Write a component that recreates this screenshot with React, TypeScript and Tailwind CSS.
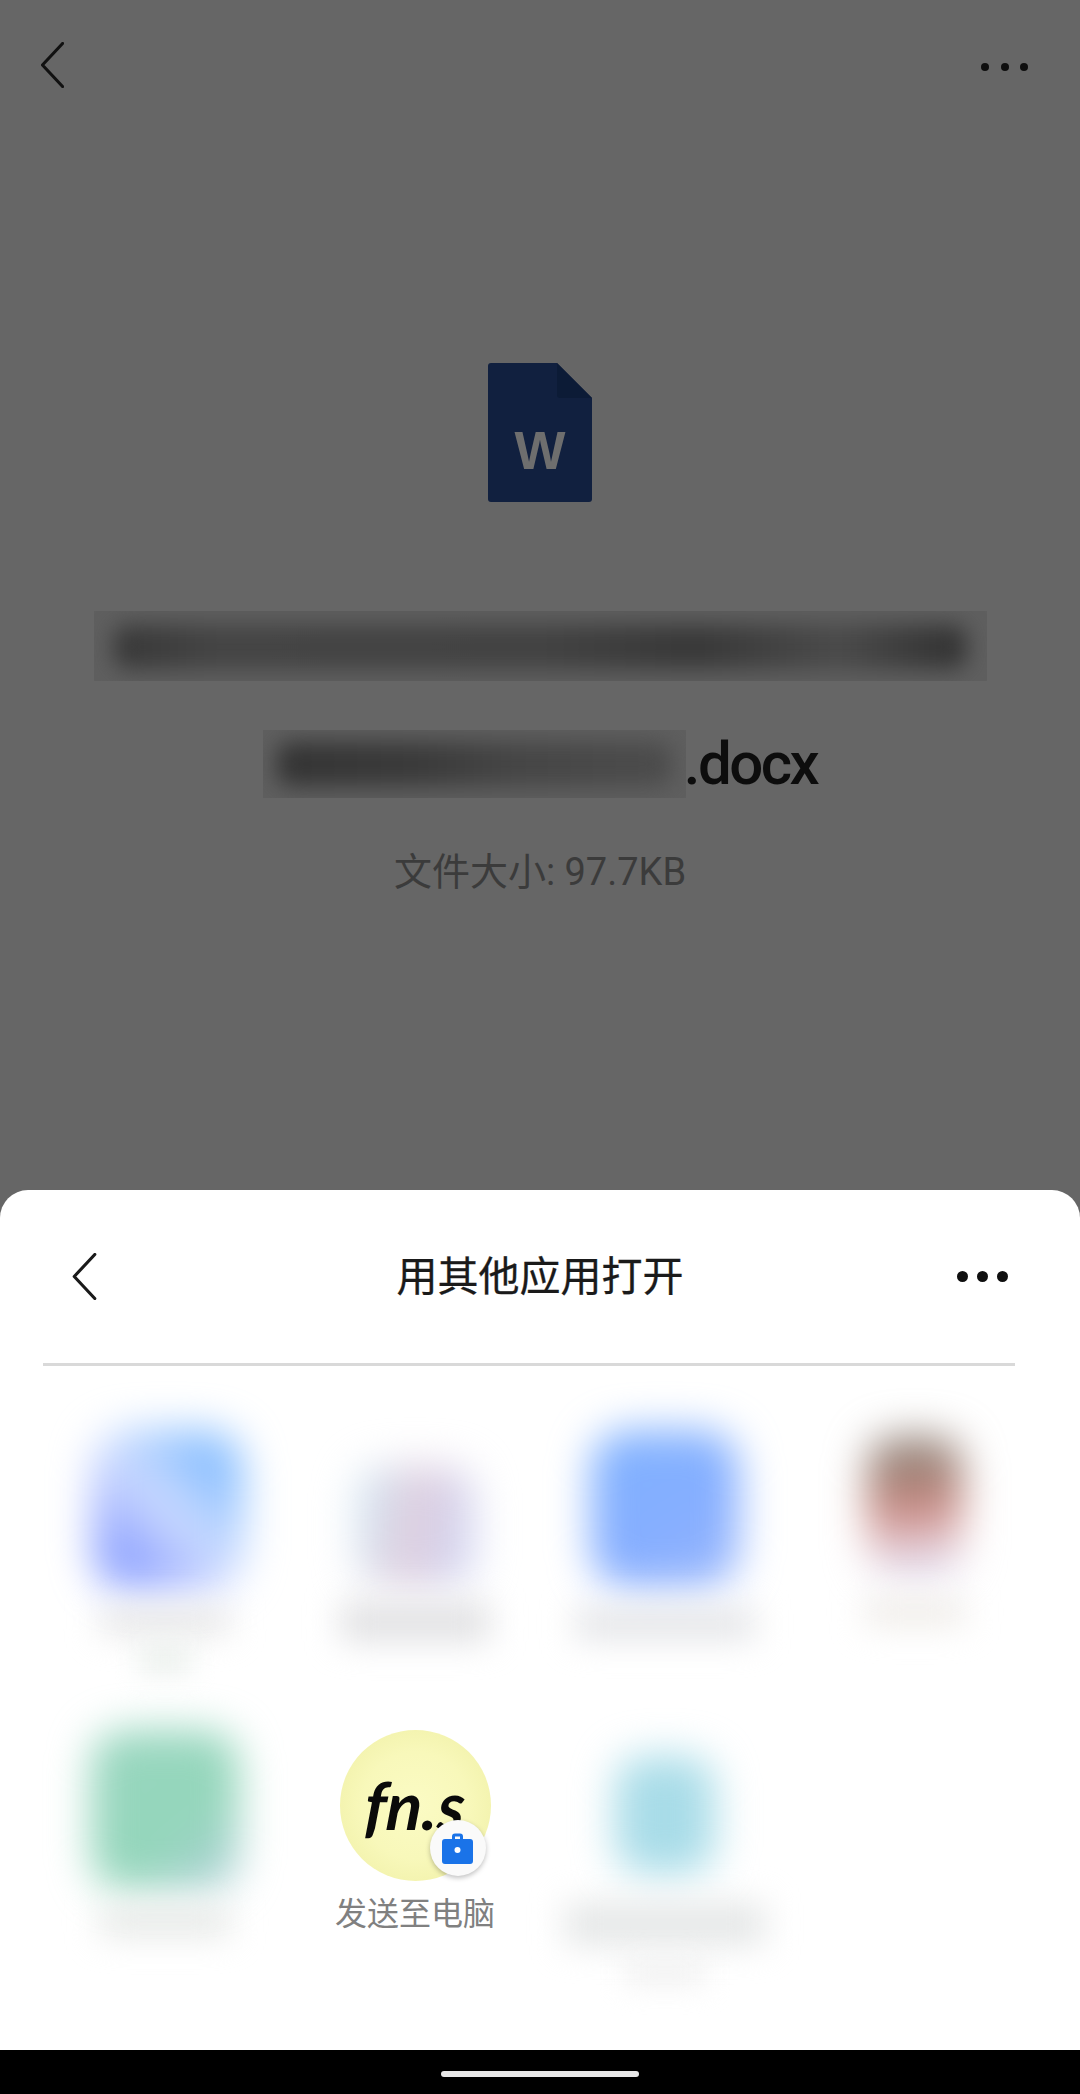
import React from "react";

const cjk = "font-['Roboto','Noto_Sans_CJK_SC',sans-serif]";

const BackIcon: React.FC<{ className?: string; color: string }> = ({ className, color }) => (
  <svg viewBox="0 0 24 48" className={className} fill="none">
    <path d="M22.5 1.5 1.5 24l21 22.500" stroke={color} strokeWidth="3.200" strokeLinecap="round" strokeLinejoin="round" />
  </svg>
);

const Dots: React.FC<{ size: string; gap: string }> = ({ size, gap }) => (
  <div className={`flex ${gap}`}>
    <span className={`${size} rounded-full bg-[#0f0f0f]`} />
    <span className={`${size} rounded-full bg-[#0f0f0f]`} />
    <span className={`${size} rounded-full bg-[#0f0f0f]`} />
  </div>
);

const FileIcon: React.FC = () => (
  <svg width="104" height="139" viewBox="0 0 104 139" className="block">
    <path d="M3 0h66l35 35v101a3 3 0 0 1-3 3H3a3 3 0 0 1-3-3V3a3 3 0 0 1 3-3z" fill="#11203f" />
    <path d="M69 0l35 35H72a3 3 0 0 1-3-3z" fill="#0c1b36" />
    <text x="52" y="106" textAnchor="middle" fontSize="54" fontWeight="700" fontFamily="Liberation Sans" fill="#6e6e6e">
      W
    </text>
  </svg>
);

const BlurBar: React.FC<{ box: string; bar: string }> = ({ box, bar }) => (
  <div className={`${box} overflow-hidden bg-[#5f5f5f]`}>
    <div className={`${bar} blur-[11px]`} />
  </div>
);

const BlurApp: React.FC<{ icon: string; label: string; extra?: string }> = ({ icon, label, extra }) => (
  <div className="flex h-[300px] flex-col items-center">
    <div className={`${icon} blur-[20px]`} />
    <div className={`${label} blur-[16px]`} />
    {extra && <div className={`${extra} blur-[14px]`} />}
  </div>
);

const App: React.FC = () => {
  return (
    <div className={`flex h-[2094px] w-[1080px] flex-col overflow-hidden bg-[#666666] ${cjk}`}>
      <div className="flex h-[1190px] flex-col items-center">
        <div className="mt-[42px] flex h-[46px] w-full items-center justify-between pl-[41px] pr-[52px]">
          <BackIcon className="h-[46px] w-[23px]" color="#111111" />
          <div className="mt-1">
            <Dots size="h-[8px] w-[8px]" gap="gap-[11.500px]" />
          </div>
        </div>
        <div className="mt-[275px]">
          <FileIcon />
        </div>
        <BlurBar
          box="mt-[109px] h-[70px] w-[893px] p-[14px_20px]"
          bar="h-[44px] w-full rounded-[14px] bg-[linear-gradient(90deg,#383838_0%,#444444_12%,#424242_50%,#383838_68%,#4a4a4a_85%,#363636_97%)]"
        />
        <div className="mt-[49px] flex h-[68px] items-center">
          <BlurBar
            box="h-[68px] w-[423px] p-[12px_14px]"
            bar="h-[44px] w-full rounded-[14px] bg-[linear-gradient(90deg,#343434_0%,#3a3a3a_35%,#454545_60%,#4c4c4c_100%)]"
          />
          <span className="ml-[-2px] text-[60px] leading-[68px] font-medium tracking-[-2.500px] text-[#0d0d0d]">.docx</span>
        </div>
        <p className="mt-[52px] text-[38px] leading-[44px] text-[#3b3b3b]">文件大小: 97.7KB</p>
      </div>

      <div className="flex flex-1 flex-col rounded-t-[28px] bg-white">
        <div className="grid h-[173px] grid-cols-[1fr_auto_1fr] items-center pl-[72px] pr-[72px]">
          <BackIcon className="h-[47px] w-[25px]" color="#1a1a1a" />
          <h1 className="text-[41px] leading-[48px] text-[#1a1a1a] [-webkit-text-stroke:0.3px_#1a1a1a]">用其他应用打开</h1>
          <div className="justify-self-end">
            <Dots size="h-[11px] w-[11px]" gap="gap-[9px]" />
          </div>
        </div>
        <div className="ml-[43px] mr-[65px] h-[3px] bg-[#d9d9d9]" />
        <div className="grid grid-cols-4 px-10 pt-[64px]">
          <BlurApp
            icon="ml-[6px] h-[160px] w-[150px] rounded-[38px] bg-[linear-gradient(225deg,#7cb8ff_0%,#8cc0ff_22%,#cddcff_50%,#a8b8ff_68%,#7f97ff_90%)]"
            label="mt-[18px] h-[26px] w-[130px] rounded bg-[#e6e6e6]"
            extra="mt-[12px] h-[26px] w-[50px] bg-[#e8eeea]"
          />
          <BlurApp
            icon="mt-[36px] h-[120px] w-[118px] rounded-[30px] bg-[linear-gradient(100deg,#cfeaf6_0%,#e0cede_48%,#ccd6f6_100%)]"
            label="mt-[16px] h-[40px] w-[150px] rounded bg-[#e2e2e4]"
          />
          <BlurApp
            icon="h-[158px] w-[148px] rounded-[38px] bg-[linear-gradient(150deg,#7fb2ff_0%,#86aeff_60%,#9cb8fb_100%)]"
            label="mt-[20px] h-[32px] w-[180px] rounded bg-[#e4e5e8]"
          />
          <BlurApp
            icon="mt-[6px] h-[140px] w-[96px] rounded-[30px] bg-[linear-gradient(175deg,#8c867e_0%,#a88478_32%,#cc8a84_52%,#e6cfd6_78%,#d6d6f4_100%)]"
            label="mt-[22px] h-[28px] w-[100px] rounded bg-[#efece8]"
          />
          <BlurApp
            icon="h-[160px] w-[148px] rounded-[34px] bg-[linear-gradient(140deg,#98d6bf_0%,#94d6bb_62%,#b4cfdc_100%)]"
            label="mt-[18px] h-[28px] w-[130px] rounded bg-[#e6e8e6]"
          />
          <div className="flex h-[300px] flex-col items-center">
            <div className="relative flex h-[151px] w-[151px] items-center justify-center rounded-full bg-[radial-gradient(circle,#fbfbc4_0%,#f8f8ba_50%,#eeeea2_100%)]">
              <span className="mt-[-2px] skew-x-[-4deg] font-['Lato',sans-serif] text-[66px] leading-[66px] font-bold italic text-[#0a0a0a]">
                fn.s
              </span>
              <div className="absolute bottom-[5px] right-[5px] flex h-[56px] w-[56px] items-center justify-center rounded-full bg-[#fafafa] shadow-[0_2px_5px_rgba(0,0,0,0.25)]">
                <svg width="31" height="31" viewBox="0 0 31 31">
                  <path
                    d="M10 6V3.500A3 3 0 0 1 13 .5h5a3 3 0 0 1 3 3V6h7a3 3 0 0 1 3 3v19a3 3 0 0 1-3 3H3a3 3 0 0 1-3-3V9a3 3 0 0 1 3-3zm3 0h5V3.500h-5z"
                    fill="#1a73e8"
                    fillRule="evenodd"
                  />
                  <circle cx="15.500" cy="17" r="3" fill="#ffffff" />
                </svg>
              </div>
            </div>
            <span className="mt-[13px] text-[32px] leading-[40px] text-[#808080]">发送至电脑</span>
          </div>
          <BlurApp
            icon="mt-[26px] h-[118px] w-[100px] rounded-[30px] bg-[#a8dce8]"
            label="mt-[28px] h-[44px] w-[200px] rounded bg-[#e6e8e8]"
            extra="mt-[14px] h-[24px] w-[80px] bg-[#f0f0f0]"
          />
        </div>
      </div>

      <div className="flex h-[44px] items-start justify-center bg-black pt-[21px]">
        <div className="h-[6px] w-[198px] rounded-full bg-[#e8e8e8]" />
      </div>
    </div>
  );
};

export default App;
